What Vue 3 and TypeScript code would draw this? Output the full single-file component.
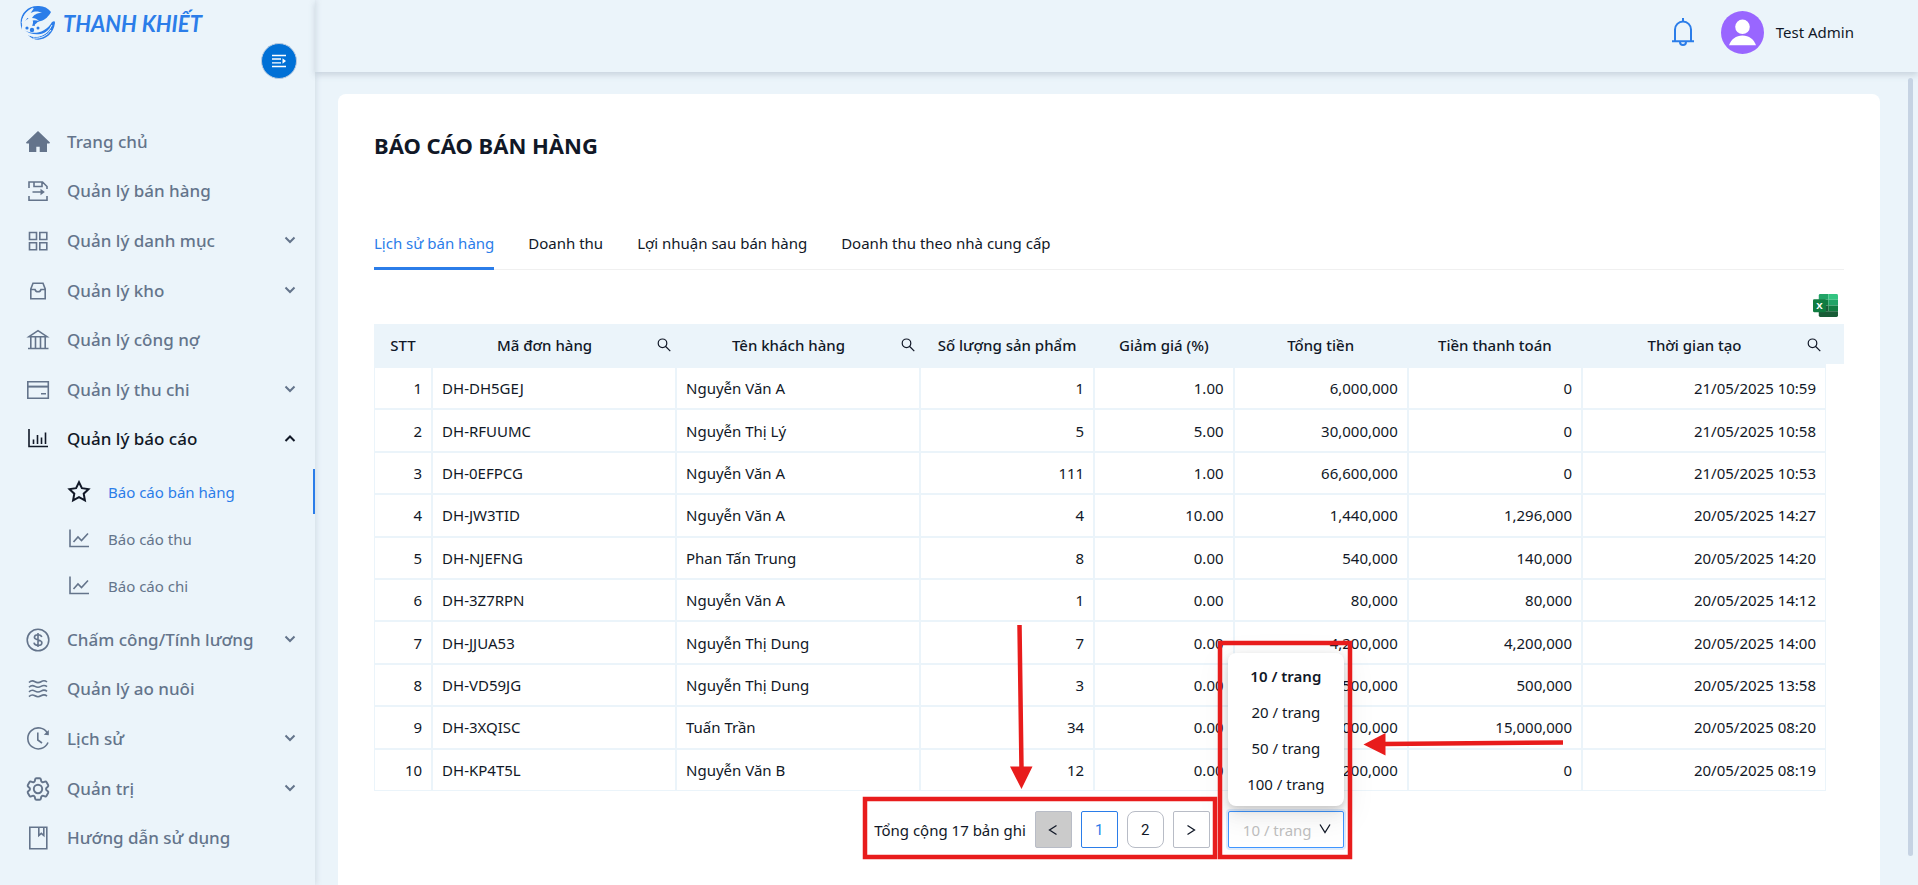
<script setup lang="ts">
import { ref } from 'vue'

interface Stroke { d: string; solid?: boolean }
interface Icon { box?: string; width?: number; strokes: Stroke[] }
interface MenuItem {
  label: string
  icon: string
  expandable?: boolean
  open?: boolean
  children?: { label: string; icon: string; active?: boolean }[]
}

const icons: Record<string, Icon> = {
  home: { strokes: [{ d: 'M12 1 24 12.5l-.6 1H21V22h-7.300v-5.200h-3.400V22H3v-8.500H.600L0 12.500z', solid: true }] },
  sale: { strokes: [{ d: 'M3 9V3h13.500L21 7.500V10M8 3v4.500h8V3.500M3 17v4.200h18V17M6.500 13h10' }, { d: 'M14.500 9.800 18.800 13l-4.300 3.200z', solid: true }] },
  grid: { strokes: [{ d: 'M3.500 3.500h7v7h-7zM13.800 3.500h7v7h-7zM3.500 13.800h7v7h-7zM13.800 13.800h7v7h-7z' }] },
  box: { strokes: [{ d: 'M4.800 10 7 4.300h10l2.200 5.700v9.700H4.800zM4.800 10.500H9c.4 1.500 1.500 2.300 3 2.300s2.600-.8 3-2.300h4.200' }] },
  bank: { strokes: [{ d: 'M3 8.700 12 2.700l9 6zM4.800 9v11M9.500 9v11M14.500 9v11M19.200 9v11M2 20.500h20.500' }] },
  card: { strokes: [{ d: 'M1.800 3.800h20.500v16.400H1.800zM15 15.800h5' }, { d: 'M1.800 7.600h20.500v2H1.800z', solid: true }] },
  bars: { strokes: [{ d: 'M3 2v17.500h19M7.500 12.500V17M11.500 8v9M15.500 10.500V17M19.500 5.500V17' }] },
  star: { width: 2, strokes: [{ d: 'm12 2.200 2.900 6 6.600.9-4.800 4.600 1.200 6.600L12 17.200l-5.900 3.100 1.200-6.600-4.800-4.600 6.600-.9z' }] },
  line: { strokes: [{ d: 'M3 2.500v17h19M6.500 15l4.500-5 3.500 3.500L21 6.500' }] },
  dollar: { strokes: [{ d: 'M12 1.200a10.800 10.800 0 1 0 0 21.600a10.800 10.800 0 1 0 0-21.600M12 5v14M15.800 9c-.4-1.500-1.800-2.300-3.800-2.300s-3.600 1-3.600 2.600c0 3.600 7.500 1.800 7.500 5.400 0 1.700-1.600 2.700-3.900 2.700s-3.800-1-4-2.700' }] },
  waves: { strokes: [{ d: 'M3 5.500c2-2 4-2 6-.8s4 1.200 6 0 4.500-1 6 .3M3 10.200c2-2 4-2 6-.8s4 1.200 6 0 4.500-1 6 .3M3 14.900c2-2 4-2 6-.8s4 1.200 6 0 4.500-1 6 .3M3 19.600c2-2 4-2 6-.8s4 1.200 6 0 4.500-1 6 .3' }] },
  history: { strokes: [{ d: 'M21.500 6.300A10.500 10.500 0 1 0 22 15.500M11.800 5.500v7.500l4.200 3' }, { d: 'M17.800 7.800 22.800 3v5.300z', solid: true }] },
  gear: {
    box: '2 2 20 20',
    strokes: [
      { d: 'M9.594 3.940c.09-.542.56-.94 1.110-.94h2.593c.55 0 1.020.398 1.110.94l.213 1.281c.063.374.313.686.645.87.074.04.147.083.22.127.325.196.72.257 1.075.124l1.217-.456a1.125 1.125 0 0 1 1.370.49l1.296 2.247a1.125 1.125 0 0 1-.26 1.431l-1.003.827c-.293.241-.438.613-.43.992a7.723 7.723 0 0 1 0 .255c-.008.378.137.75.43.991l1.004.827c.424.35.534.955.26 1.430l-1.298 2.247a1.125 1.125 0 0 1-1.369.491l-1.217-.456c-.355-.133-.75-.072-1.076.124a6.470 6.470 0 0 1-.22.128c-.331.183-.581.495-.644.869l-.213 1.281c-.09.543-.56.94-1.110.94h-2.594c-.55 0-1.019-.398-1.110-.94l-.213-1.281c-.062-.374-.312-.686-.644-.87a6.520 6.520 0 0 1-.22-.127c-.325-.196-.72-.257-1.076-.124l-1.217.456a1.125 1.125 0 0 1-1.369-.49l-1.297-2.247a1.125 1.125 0 0 1 .26-1.431l1.004-.827c.292-.24.437-.613.43-.991a6.932 6.932 0 0 1 0-.255c.007-.38-.138-.751-.43-.992l-1.004-.827a1.125 1.125 0 0 1-.26-1.430l1.297-2.247a1.125 1.125 0 0 1 1.370-.491l1.216.456c.356.133.751.072 1.076-.124.072-.044.146-.086.22-.128.332-.183.582-.495.644-.869l.214-1.280ZM12 8.500a3.500 3.500 0 1 0 0 7a3.500 3.500 0 1 0 0-7' },
    ],
  },
  book: { strokes: [{ d: 'M3.800 1.300h17v21.400h-17zM12.800 1.500v8l2.500-2.200 2.500 2.200v-8' }] },
}

const menu: MenuItem[] = [
  { label: 'Trang chủ', icon: 'home' },
  { label: 'Quản lý bán hàng', icon: 'sale' },
  { label: 'Quản lý danh mục', icon: 'grid', expandable: true },
  { label: 'Quản lý kho', icon: 'box', expandable: true },
  { label: 'Quản lý công nợ', icon: 'bank' },
  { label: 'Quản lý thu chi', icon: 'card', expandable: true },
  {
    label: 'Quản lý báo cáo', icon: 'bars', expandable: true, open: true,
    children: [
      { label: 'Báo cáo bán hàng', icon: 'star', active: true },
      { label: 'Báo cáo thu', icon: 'line' },
      { label: 'Báo cáo chi', icon: 'line' },
    ],
  },
  { label: 'Chấm công/Tính lương', icon: 'dollar', expandable: true },
  { label: 'Quản lý ao nuôi', icon: 'waves' },
  { label: 'Lịch sử', icon: 'history', expandable: true },
  { label: 'Quản trị', icon: 'gear', expandable: true },
  { label: 'Hướng dẫn sử dụng', icon: 'book' },
]

const tabs = ['Lịch sử bán hàng', 'Doanh thu', 'Lợi nhuận sau bán hàng', 'Doanh thu theo nhà cung cấp']
const activeTab = ref(0)

const columns: { title: string; cls: string; search?: boolean }[] = [
  { title: 'STT', cls: 'c-stt' },
  { title: 'Mã đơn hàng', cls: 'c-wide', search: true },
  { title: 'Tên khách hàng', cls: 'c-wide', search: true },
  { title: 'Số lượng sản phẩm', cls: 'c-mid' },
  { title: 'Giảm giá (%)', cls: 'c-small' },
  { title: 'Tổng tiền', cls: 'c-mid' },
  { title: 'Tiền thanh toán', cls: 'c-mid' },
  { title: 'Thời gian tạo', cls: 'c-wide', search: true },
]

const rows: string[][] = [
  ['1', 'DH-DH5GEJ', 'Nguyễn Văn A', '1', '1.00', '6,000,000', '0', '21/05/2025 10:59'],
  ['2', 'DH-RFUUMC', 'Nguyễn Thị Lý', '5', '5.00', '30,000,000', '0', '21/05/2025 10:58'],
  ['3', 'DH-0EFPCG', 'Nguyễn Văn A', '111', '1.00', '66,600,000', '0', '21/05/2025 10:53'],
  ['4', 'DH-JW3TID', 'Nguyễn Văn A', '4', '10.00', '1,440,000', '1,296,000', '20/05/2025 14:27'],
  ['5', 'DH-NJEFNG', 'Phan Tấn Trung', '8', '0.00', '540,000', '140,000', '20/05/2025 14:20'],
  ['6', 'DH-3Z7RPN', 'Nguyễn Văn A', '1', '0.00', '80,000', '80,000', '20/05/2025 14:12'],
  ['7', 'DH-JJUA53', 'Nguyễn Thị Dung', '7', '0.00', '4,200,000', '4,200,000', '20/05/2025 14:00'],
  ['8', 'DH-VD59JG', 'Nguyễn Thị Dung', '3', '0.00', '500,000', '500,000', '20/05/2025 13:58'],
  ['9', 'DH-3XQISC', 'Tuấn Trần', '34', '0.00', '15,000,000', '15,000,000', '20/05/2025 08:20'],
  ['10', 'DH-KP4T5L', 'Nguyễn Văn B', '12', '0.00', '1,200,000', '0', '20/05/2025 08:19'],
]

const pageSizes = [10, 20, 50, 100]
const pageSize = ref(10)
const page = ref(1)
</script>

<template>
  <div class="app">
    <aside class="sidebar">
      <a class="logo" href="#">
        <svg class="logo-mark" viewBox="0 0 36 36" aria-hidden="true">
          <path d="M2 25C-3 12 6 0 19 1c5 0 9 2 12 6-2 4-6 8-10 9-4 0-5 4-9 5 2-4 1-7-2-8-5 2-9 5-8 12z" fill="#2b7de9" />
          <path d="M2 21C1 12 6 5 14 3M6 12c6-7 12-6 16-4-6 0-8 2-10 5 3 0 5 1 7 3-3-1-6-1-8 0-2-2-3-3-5-4z" fill="#ebf4fa" />
          <path d="M2 18C3 11 7 6 13 3" fill="none" stroke="#ebf4fa" />
          <path d="M4 25c8 5 21 4 28-8 2-1 3-1 3 1-2 15-18 22-27 12 8 4 18 1 23-7-7 8-19 8-27 2z" fill="#2b7de9" />
          <path d="M9 30c8 4 18 0 23-10M13 33c7 1 14-2 18-8" fill="none" stroke="#ebf4fa" />
          <g fill="#2b7de9"><circle cx="12" cy="25" r="2.200" /><circle cx="18" cy="23" r="1.500" /><circle cx="7" cy="23" r="1.600" /><circle cx="14" cy="20" r="1" /></g>
        </svg>
        <span class="logo-text">THANH KHIẾT</span>
      </a>
      <button class="collapse" type="button" aria-label="Thu gọn menu">
        <svg viewBox="0 0 16 14" aria-hidden="true">
          <path d="M1 1.500h14M1 5h9M1 8.800h9M1 12.500h14" stroke="#fff" stroke-width="1.300" />
          <path d="M11.500 4.300 15 7l-3.500 2.700z" fill="#fff" />
        </svg>
      </button>
      <nav class="menu">
        <template v-for="item in menu" :key="item.label">
          <a class="menu-item" :class="{ open: item.open }" href="#">
            <svg class="icon" :viewBox="icons[item.icon].box ?? '0 0 24 24'" aria-hidden="true">
              <path v-for="s in icons[item.icon].strokes" :key="s.d" :d="s.d" :class="s.solid ? 'solid' : 'stroke'" />
            </svg>
            <span class="menu-label">{{ item.label }}</span>
            <svg v-if="item.expandable" class="chevron" viewBox="0 0 12 12" aria-hidden="true">
              <path :d="item.open ? 'M1.500 8 6 3.500 10.500 8' : 'M1.500 2.500 6 7l4.500-4.500'" />
            </svg>
          </a>
          <div v-if="item.children" class="submenu">
            <a v-for="sub in item.children" :key="sub.label" class="sub-item" :class="{ active: sub.active }" href="#">
              <svg class="icon" viewBox="0 0 24 24" aria-hidden="true">
                <path v-for="s in icons[sub.icon].strokes" :key="s.d" :d="s.d" class="stroke" />
              </svg>
              <span>{{ sub.label }}</span>
            </a>
          </div>
        </template>
      </nav>
    </aside>

    <div class="main">
      <header class="topbar">
        <button class="bell" type="button" aria-label="Thông báo">
          <svg viewBox="0 0 24 30" aria-hidden="true">
            <path d="M4 24V12.500a8 8 0 0 1 16 0V24M1 24.300h22M12 4.500V1M9 25a3 3 0 0 0 6 0" />
          </svg>
        </button>
        <svg class="avatar" viewBox="0 0 43 43" aria-hidden="true">
          <circle cx="21.500" cy="21.500" r="21.500" fill="#9966ff" />
          <circle cx="21.500" cy="15.800" r="7.300" fill="#fff" />
          <path d="M8 34.300c2-6 7-9.800 13.500-9.800S33 28.300 35 34.300z" fill="#fff" />
        </svg>
        <span class="user">Test Admin</span>
      </header>

      <div class="scroll">
        <main class="card">
          <h1>BÁO CÁO BÁN HÀNG</h1>
          <div class="tabs" role="tablist">
            <button
              v-for="(tab, i) in tabs" :key="tab" type="button" role="tab" class="tab"
              :class="{ active: i === activeTab }" :aria-selected="i === activeTab" @click="activeTab = i"
            >{{ tab }}</button>
          </div>

          <div class="toolbar">
            <button class="excel" type="button" aria-label="Xuất Excel">
              <svg viewBox="0 0 26 24" aria-hidden="true">
                <path d="M6 1.500A1.500 1.500 0 0 1 7.500 0H16v6H6z" fill="#21a366" />
                <path d="M16 0h8.500A1.500 1.500 0 0 1 26 1.500V6H16z" fill="#33c481" />
                <path d="M6 6h10v6H6z" fill="#107c41" />
                <path d="M16 6h10v6H16z" fill="#21a366" />
                <path d="M6 12h10v6H6z" fill="#185c37" />
                <path d="M16 12h10v6H16z" fill="#107c41" />
                <path d="M6 18h20v4.500a1.500 1.500 0 0 1-1.500 1.500h-17A1.500 1.500 0 0 1 6 22.500z" fill="#185c37" />
                <rect y="5.500" width="13.500" height="13.500" rx="1.200" fill="#107c41" />
                <text x="6.700" y="16" text-anchor="middle" class="excel-x">X</text>
              </svg>
            </button>
          </div>

          <div class="table-wrap">
            <table>
              <thead>
                <tr>
                  <th v-for="col in columns" :key="col.title" :class="col.cls" scope="col">
                    <div class="th-inner">
                      <span>{{ col.title }}</span>
                      <button v-if="col.search" class="search" type="button" :aria-label="'Tìm ' + col.title">
                        <svg viewBox="0 0 14 14" aria-hidden="true"><path d="M5.500 1a4.300 4.300 0 1 0 0 8.600a4.300 4.300 0 1 0 0-8.600M8.700 8.500l4.600 4.600" /></svg>
                      </button>
                    </div>
                  </th>
                </tr>
              </thead>
              <tbody>
                <tr v-for="row in rows" :key="row[0]">
                  <td v-for="(cell, i) in row" :key="i" :class="{ left: i === 1 || i === 2 }">{{ cell }}</td>
                </tr>
              </tbody>
            </table>
            <div class="gutter"></div>
          </div>

          <div class="pagination">
            <span class="total">Tổng cộng 17 bản ghi</span>
            <button class="page disabled" type="button" aria-label="Trang trước">
              <svg viewBox="0 0 12 12" aria-hidden="true"><path d="M9.500 1.500 2.500 6l7 4.500" /></svg>
            </button>
            <button class="page current" type="button" @click="page = 1">1</button>
            <button class="page round" type="button" @click="page = 2">2</button>
            <button class="page" type="button" aria-label="Trang sau">
              <svg viewBox="0 0 12 12" aria-hidden="true"><path d="m2.500 1.500 7 4.500-7 4.500" /></svg>
            </button>
            <div class="size">
              <select v-model="pageSize" aria-label="Số bản ghi mỗi trang">
                <option v-for="n in pageSizes" :key="n" :value="n">{{ n }} / trang</option>
              </select>
              <svg class="arrow" viewBox="0 0 12 12" aria-hidden="true"><path d="m1 1.500 5 8 5-8" /></svg>
              <ul class="dropdown" role="listbox" aria-label="Số bản ghi mỗi trang">
                <li v-for="n in pageSizes" :key="n" role="option" :aria-selected="n === pageSize" :class="{ selected: n === pageSize }" @click="pageSize = n">{{ n }} / trang</li>
              </ul>
            </div>
            <svg class="notes" viewBox="0 0 471 37" aria-hidden="true">
              <rect x="-8" y="-12" width="350" height="58" />
              <rect x="347" y="-168" width="130" height="214" />
              <path d="M146.500-186 148.500-42M690-68.500 510-67" />
              <path class="tip" d="M137-44.500h22.500L148.500-22zM512.500-78v22.500L490.500-66.500z" />
            </svg>
          </div>
        </main>
        <div class="thumb"></div>
      </div>
    </div>
  </div>
</template>

<style>
body {
  margin: 0;
  overflow: hidden;
}
</style>

<style scoped>
.app {
  display: flex;
  height: 100vh;
  background: #ebf4fa;
  color: #111827;
  font: 15px/22px "Noto Sans", "Open Sans", sans-serif;
}
.app *,
.app *::before {
  box-sizing: border-box;
}
button {
  padding: 0;
  border: 0;
  background: none;
  color: inherit;
  font: inherit;
  cursor: pointer;
}
a {
  color: inherit;
  text-decoration: none;
}

.sidebar {
  display: flex;
  flex: 0 0 315px;
  flex-direction: column;
  padding-bottom: 22px;
  box-shadow: 1px 0 6px rgba(100, 116, 139, 0.2);
  color: #64748b;
}
.logo {
  display: flex;
  gap: 7px;
  height: 43px;
  padding: 5px 0 0 20px;
}
.logo-mark {
  width: 36px;
  height: 36px;
}
.logo-text {
  color: #2b7de9;
  font: italic bold 22px/38px Lato, sans-serif;
}
.collapse {
  display: flex;
  align-items: center;
  justify-content: center;
  align-self: flex-end;
  width: 36px;
  height: 36px;
  margin: 0 18px 38px 0;
  border: 1px solid #b9cbe0;
  border-radius: 50%;
  background: #0070d6;
}
.collapse svg {
  width: 16px;
  height: 14px;
}
.menu {
  display: flex;
  flex: 1;
  flex-direction: column;
}
.menu-item {
  display: flex;
  flex: 1;
  align-items: center;
  padding: 0 19px 0 26px;
  font-size: 17px;
  font-weight: 500;
}
.menu-item.open {
  color: #111827;
}
.menu-label {
  flex: 1;
  white-space: nowrap;
}
.icon {
  flex: none;
  width: 24px;
  height: 24px;
  margin-right: 17px;
}
.stroke {
  fill: none;
  stroke: currentColor;
  stroke-width: 1.6;
}
.active .stroke {
  stroke-width: 2;
}
.solid {
  fill: currentColor;
}
.chevron {
  width: 12px;
  height: 12px;
}
.chevron path {
  fill: none;
  stroke: currentColor;
  stroke-width: 2;
}
.submenu {
  display: flex;
  flex-direction: column;
  gap: 2px;
  padding: 5px 0 7px;
}
.sub-item {
  display: flex;
  align-items: center;
  height: 45px;
  padding-left: 67px;
}
.sub-item.active {
  border-right: 2px solid #2b7de9;
  color: #2b7de9;
}
.sub-item.active .icon {
  color: #111827;
}

.main {
  display: flex;
  flex: 1;
  flex-direction: column;
  min-width: 0;
}
.topbar {
  display: flex;
  flex: 0 0 72px;
  align-items: center;
  justify-content: flex-end;
  padding: 0 64px 8px 0;
  box-shadow: 0 3px 6px rgba(100, 116, 139, 0.25);
}
.bell {
  width: 24px;
  height: 30px;
  margin-right: 26px;
}
.bell svg {
  display: block;
}
.bell path {
  fill: none;
  stroke: #2b7de9;
  stroke-width: 2;
}
.avatar {
  width: 43px;
  height: 43px;
  margin-right: 12px;
}
.scroll {
  display: flex;
  flex: 1;
  align-items: stretch;
  min-height: 0;
  padding: 22px 5px 0 23px;
}
.card {
  flex: 1;
  min-width: 0;
  padding: 35px 36px;
  border-radius: 8px 8px 0 0;
  background: #fff;
}
.thumb {
  flex: 0 0 5px;
  margin: -16px 0 29px 28px;
  border-radius: 3px;
  background: #c6d3e3;
}
h1 {
  margin: 0 0 70px;
  font-size: 22px;
  font-weight: 700;
  line-height: 32px;
}
.tabs {
  display: flex;
  gap: 34px;
  height: 39px;
  border-bottom: 1px solid #f0f0f0;
}
.tab {
  height: 39px;
  padding-bottom: 12px;
  border-bottom: 3px solid transparent;
  white-space: nowrap;
}
.tab.active {
  border-bottom-color: #2b7de9;
  color: #2b7de9;
}
.toolbar {
  display: flex;
  justify-content: flex-end;
  padding: 24px 6px 6px 0;
}
.excel {
  width: 25px;
  height: 24px;
}
.excel svg {
  display: block;
}
.excel-x {
  fill: #fff;
  font: bold 10px "Noto Sans", sans-serif;
}

.table-wrap {
  display: flex;
  align-items: flex-start;
}
table {
  flex: 1;
  height: 467px;
  border-spacing: 0;
  table-layout: fixed;
}
th {
  height: 43px;
  padding: 0 0 2px;
  background: #ebf4fa;
  font-weight: 500;
}
.c-stt { width: 4%; }
.c-wide { width: 16.8%; }
.c-mid { width: 12%; }
.c-small { width: 9.6%; }
.th-inner {
  display: flex;
  align-items: center;
  padding: 0 5px;
  white-space: nowrap;
}
.th-inner span {
  flex: 1;
}
.search {
  width: 14px;
  height: 14px;
  margin-left: 5px;
}
.search svg {
  display: block;
}
.search path {
  fill: none;
  stroke: #111827;
  stroke-width: 1.2;
}
td {
  padding: 0 9px;
  border: 1px solid #ebf4fa;
  text-align: right;
}
td.left {
  text-align: left;
}
.gutter {
  flex: 0 0 18px;
  height: 40px;
  background: #ebf4fa;
}

.pagination {
  position: relative;
  display: flex;
  gap: 9px;
  align-items: center;
  width: fit-content;
  margin: 20px auto 0;
}
.page {
  display: flex;
  align-items: center;
  justify-content: center;
  width: 37px;
  height: 37px;
  border: 1px solid #b8bcc6;
  border-radius: 2px;
  background: #fff;
  font-family: Roboto, sans-serif;
}
.page svg {
  width: 12px;
  height: 12px;
}
.page path,
.arrow path {
  fill: none;
  stroke: #111827;
  stroke-width: 1.3;
}
.page.disabled {
  background: #cbcbcb;
}
.page.current {
  border-color: #2b7de9;
  color: #2b7de9;
}
.page.round {
  border-radius: 8px;
}
.size {
  position: relative;
  margin-left: 9px;
}
.size select {
  display: block;
  width: 116px;
  height: 37px;
  padding: 0 24px 0 14px;
  border: 1px solid #4096ff;
  border-radius: 2px;
  outline: 0;
  appearance: none;
  background: #fff;
  box-shadow: 0 0 0 2px rgba(43, 125, 233, 0.15);
  color: #bfbfbf;
  font: inherit;
}
.arrow {
  position: absolute;
  top: 12px;
  right: 13px;
  width: 12px;
  height: 12px;
}
.dropdown {
  position: absolute;
  bottom: 42px;
  left: 0;
  width: 116px;
  margin: 0;
  padding: 5px 4px 4px;
  border-radius: 8px;
  background: #fff;
  box-shadow: 0 6px 16px rgba(0, 0, 0, 0.08), 0 3px 6px rgba(0, 0, 0, 0.12), 0 9px 28px 8px rgba(0, 0, 0, 0.05);
  list-style: none;
}
.dropdown li {
  line-height: 36px;
  text-align: center;
}
.dropdown .selected {
  font-weight: 600;
}
.notes {
  position: absolute;
  top: 0;
  right: 0;
  width: 471px;
  height: 37px;
  overflow: visible;
  pointer-events: none;
}
.notes rect,
.notes path {
  fill: none;
  stroke: #e81c1c;
  stroke-width: 4.5;
}
.notes .tip {
  fill: #e81c1c;
  stroke: none;
}
</style>
